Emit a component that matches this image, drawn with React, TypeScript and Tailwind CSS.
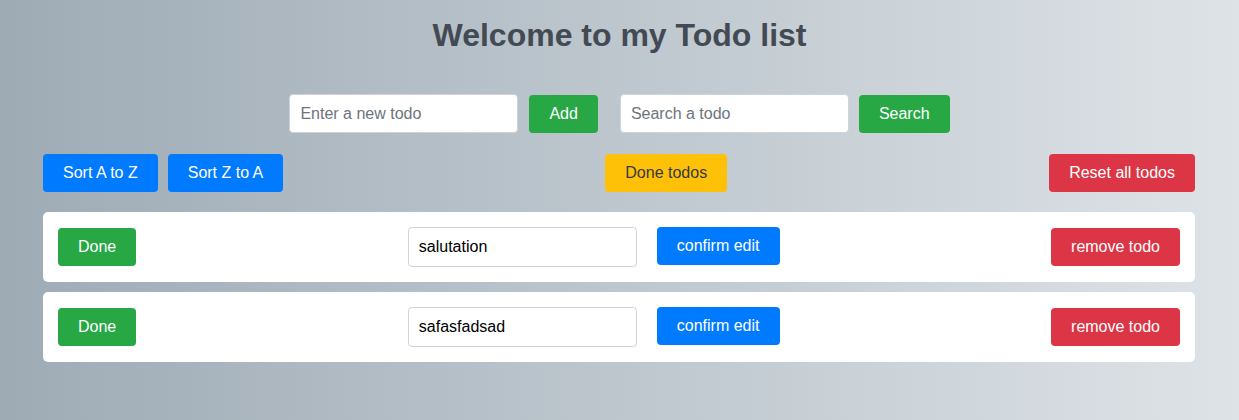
import React, { useState } from 'react';

type Todo = { id: number; text: string };

const initialTodos: Todo[] = [
  { id: 1, text: 'salutation' },
  { id: 2, text: 'safasfadsad' },
];

const btn = 'h-[38px] px-5 rounded text-base leading-6 text-white whitespace-nowrap';

function TodoRow({ todo }: { todo: Todo }) {
  const [value, setValue] = useState(todo.text);
  return (
    <div className="flex h-[70px] items-center justify-between rounded-[5px] bg-white px-[15px]">
      <button className={`${btn} bg-[#28a745]`}>Done</button>
      <div className="flex items-start gap-5">
        <input
          value={value}
          onChange={(e) => setValue(e.target.value)}
          className="h-10 w-[229px] rounded border border-[#ced4da] bg-white px-[10px] text-base text-black outline-none"
        />
        <button className={`${btn} bg-[#007bff]`}>confirm edit</button>
      </div>
      <button className={`${btn} bg-[#dc3545]`}>remove todo</button>
    </div>
  );
}

export default function App() {
  const [todos] = useState<Todo[]>(initialTodos);

  return (
    <div
      className="min-h-[420px] w-full bg-gradient-to-r from-[#9eabb5] to-[#dee3e7] pb-10"
      style={{ fontFamily: '"Liberation Sans", Arial, sans-serif' }}
    >
      <h1 className="pt-4 text-center text-[32px] font-bold leading-[38px] text-[#434a53]">
        Welcome to my Todo list
      </h1>

      <div className="mt-10 flex justify-center">
        <div className="flex items-center">
          <input
            placeholder="Enter a new todo"
            className="h-[39px] w-[229px] rounded border border-[#ced4da] bg-white px-[10px] text-base text-black outline-none placeholder:text-[#6c757d]"
          />
          <button className={`${btn} ml-[11px] bg-[#28a745]`}>Add</button>
        </div>
        <div className="ml-[22px] flex items-center">
          <input
            placeholder="Search a todo"
            className="h-[39px] w-[229px] rounded border border-[#ced4da] bg-white px-[10px] text-base text-black outline-none placeholder:text-[#6c757d]"
          />
          <button className={`${btn} ml-[10px] bg-[#28a745]`}>Search</button>
        </div>
      </div>

      <div className="ml-[43px] mt-[21px] w-[1152px]">
        <div className="flex items-center justify-between">
          <div className="flex gap-[10px]">
            <button className={`${btn} bg-[#007bff]`}>Sort A to Z</button>
            <button className={`${btn} bg-[#007bff]`}>Sort Z to A</button>
          </div>
          <button className={`${btn} bg-[#ffc107] !text-[#343a40]`}>Done todos</button>
          <button className={`${btn} bg-[#dc3545]`}>Reset all todos</button>
        </div>

        <div className="mt-5 flex flex-col gap-[10px]">
          {todos.map((todo) => (
            <TodoRow key={todo.id} todo={todo} />
          ))}
        </div>
      </div>
    </div>
  );
}
